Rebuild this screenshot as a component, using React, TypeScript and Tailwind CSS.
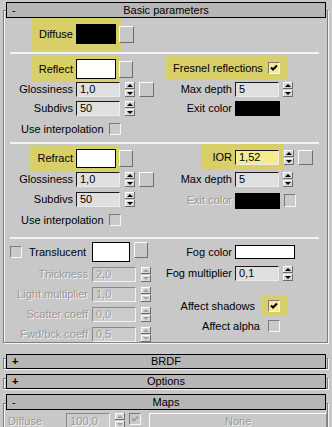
const DIS = "text-[#999999] [text-shadow:1px_1px_0_#f4f4f4]";
const HL = "bg-[#d8cf68]";

type Cn = { className?: string };

function Spinner({ className = "", off = false }: Cn & { off?: boolean }) {
  const a = off ? "#a2a2a2" : "#000000";
  return (
    <svg width="10" height="15" viewBox="0 0 10 15" className={`block shrink-0 ${className}`}>
      <rect x="0" y="0" width="10" height="7" fill="#d8d8d8" />
      <rect x="0" y="8" width="10" height="7" fill="#d8d8d8" />
      <rect x="0" y="0" width="10" height="1" fill="#ffffff" />
      <rect x="0" y="0" width="1" height="7" fill="#ffffff" />
      <rect x="0" y="6" width="10" height="1" fill="#6c6c6c" />
      <rect x="9" y="0" width="1" height="7" fill="#6c6c6c" />
      <rect x="0" y="8" width="10" height="1" fill="#ffffff" />
      <rect x="0" y="8" width="1" height="7" fill="#ffffff" />
      <rect x="0" y="14" width="10" height="1" fill="#6c6c6c" />
      <rect x="9" y="8" width="1" height="7" fill="#6c6c6c" />
      <polygon points="5,2 8,5 2,5" fill={a} />
      <polygon points="2,10 8,10 5,13" fill={a} />
    </svg>
  );
}

function MapBtn({ className = "" }: Cn) {
  return (
    <div
      className={`shrink-0 bg-[#c8c8c8] border border-t-white border-l-white border-b-[#6f6f6f] border-r-[#6f6f6f] ${className}`}
    />
  );
}

function Swatch({ className = "" }: Cn) {
  return <div className={`shrink-0 border border-black ${className}`} />;
}

function Field({
  value,
  className = "",
  tone = "normal",
}: Cn & { value: string; tone?: "normal" | "yellow" | "off" }) {
  const look =
    tone === "yellow"
      ? "bg-[#f3ed92] border-t-[#1a1a1a] border-l-[#1a1a1a] border-b-[#ececec] border-r-[#ececec]"
      : tone === "off"
      ? `bg-[#cbcbcb] border-t-[#8a8a8a] border-l-[#8a8a8a] border-b-[#f2f2f2] border-r-[#f2f2f2] ${DIS}`
      : "bg-[#dfdfdf] border-t-[#1a1a1a] border-l-[#1a1a1a] border-b-[#ececec] border-r-[#ececec]";
  return (
    <div className={`w-[44px] h-[15px] shrink-0 border pl-[3px] flex items-center ${look} ${className}`}>
      {value}
    </div>
  );
}

function Check({
  className = "",
  checked = false,
  tone = "normal",
}: Cn & { checked?: boolean; tone?: "normal" | "yellow" | "off" }) {
  const bg = tone === "yellow" ? "bg-[#f3ec97]" : "bg-[#cacaca]";
  const mark = tone === "off" ? "#a0a0a0" : "#000000";
  return (
    <div
      className={`w-[12px] h-[12px] shrink-0 border border-t-[#7a7a7a] border-l-[#7a7a7a] border-b-[#f6f6f6] border-r-[#f6f6f6] ${bg} ${className}`}
    >
      {checked && (
        <svg width="10" height="10" viewBox="0 0 10 10" className="block">
          <polyline points="2,4.5 4,6.5 8,2.5" fill="none" stroke={mark} strokeWidth="2" />
        </svg>
      )}
    </div>
  );
}

function Bar({ sign, title, className = "" }: Cn & { sign: string; title: string }) {
  return (
    <div
      className={`relative z-10 ml-[6px] w-[320px] grid grid-cols-[16px_1fr_16px] items-center bg-[#b6b6b6] border border-black ${className}`}
    >
      <span className={`pl-[5px] ${sign === "+" ? "font-bold" : ""}`}>{sign}</span>
      <span className="text-center">{title}</span>
      <span />
    </div>
  );
}

const frame =
  "ml-[3px] mr-[4px] border border-[#7d7d7d] shadow-[inset_1px_1px_0_#f4f4f4,1px_1px_0_#f4f4f4]";

function Sep({ className = "" }: Cn) {
  return <div className={`ml-[6px] w-[309px] h-[2px] bg-[#f2f2f2] ${className}`} />;
}

function Collapsed({ title, className = "" }: Cn & { title: string }) {
  return (
    <div className={className}>
      <Bar sign="+" title={title} className="h-[15px]" />
      <div className={`-mt-[11px] h-[11px] ${frame}`} />
    </div>
  );
}

function NumLeft({ label, value, lw, map = false, off = false }: { label: string; value: string; lw: string; map?: boolean; off?: boolean }) {
  return (
    <div className="flex h-[15px] items-center">
      <span className={`${lw} shrink-0 text-right ${off ? DIS : ""}`}>{label}</span>
      <Field value={value} tone={off ? "off" : "normal"} className={off ? "ml-[4px]" : "ml-[3px]"} />
      <Spinner className="ml-[5px]" off={off} />
      {map && <MapBtn className="ml-[4px] w-[15px] h-[15px]" />}
    </div>
  );
}

export default function App() {
  return (
    <div className="w-[332px] h-[427px] overflow-hidden bg-[#c8c8c8] text-[11px] leading-none text-black font-['Liberation_Sans',Arial,sans-serif] select-none">
      <div className="pt-[2px]">
        <Bar sign="-" title="Basic parameters" className="h-[16px]" />
        <div className={`-mt-[8px] pt-[6px] ${frame}`}>
          {/* diffuse */}
          <div className="flex h-[34px] items-center">
            <div className={`ml-[28px] w-[89px] h-full flex items-center ${HL}`}>
              <span className="w-[41px] text-right">Diffuse</span>
              <div className="ml-[3px] w-[40px] h-[20px] bg-black" />
            </div>
            <MapBtn className="relative -ml-[2px] w-[15px] h-[17px]" />
          </div>
          <Sep className="mt-[1px]" />

          {/* reflection */}
          <div className="mt-[2px] flex h-[26px]">
            <div className="w-[156px] shrink-0 flex items-center">
              <div className={`ml-[28px] w-[87px] h-full flex items-center ${HL}`}>
                <span className="w-[41px] text-right">Reflect</span>
                <Swatch className="ml-[3px] w-[40px] h-[20px] bg-white" />
              </div>
              <MapBtn className="w-[14px] h-[17px]" />
            </div>
            <div className={`ml-[6px] w-[121px] h-[24px] flex items-center pl-[7px] pr-[7px] ${HL}`}>
              <span className="flex-1">Fresnel reflections</span>
              <Check checked tone="yellow" />
            </div>
          </div>
          <div className="flex">
            <div className="w-[156px] shrink-0">
              <NumLeft label="Glossiness" value="1,0" lw="w-[69px]" map />
              <div className="mt-[4px]">
                <NumLeft label="Subdivs" value="50" lw="w-[69px]" />
              </div>
            </div>
            <div>
              <div className="flex h-[15px] items-center">
                <span className="w-[72px] text-right">Max depth</span>
                <Field value="5" className="ml-[3px]" />
                <Spinner className="ml-[4px]" />
              </div>
              <div className="mt-[4px] flex h-[15px] items-center">
                <span className="w-[72px] text-right">Exit color</span>
                <Swatch className="ml-[3px] w-[45px] h-[15px] bg-black" />
              </div>
            </div>
          </div>
          <div className="mt-[6px] flex h-[14px] items-center">
            <span className="ml-[17px] w-[88px]">Use interpolation</span>
            <Check />
          </div>
          <Sep className="mt-[6px]" />

          {/* refraction */}
          <div className="flex h-[27px]">
            <div className="w-[156px] shrink-0 flex items-end">
              <div className="flex items-center">
                <div className={`ml-[26px] w-[89px] h-[25px] flex items-center ${HL}`}>
                  <span className="w-[43px] text-right">Refract</span>
                  <Swatch className="ml-[3px] w-[40px] h-[19px] bg-white" />
                </div>
                <MapBtn className="w-[14px] h-[17px]" />
              </div>
            </div>
            <div className="flex h-[26px] items-center">
              <div className={`ml-[41px] w-[82px] h-full flex items-center ${HL}`}>
                <span className="w-[31px] text-right">IOR</span>
                <Field value="1,52" tone="yellow" className="ml-[3px]" />
              </div>
              <Spinner className="ml-[1px]" />
              <MapBtn className="ml-[4px] w-[15px] h-[15px]" />
            </div>
          </div>
          <div className="mt-[1px] flex">
            <div className="w-[156px] shrink-0">
              <NumLeft label="Glossiness" value="1,0" lw="w-[69px]" map />
              <div className="mt-[5px]">
                <NumLeft label="Subdivs" value="50" lw="w-[69px]" />
              </div>
            </div>
            <div>
              <div className="flex h-[15px] items-center">
                <span className="w-[72px] text-right">Max depth</span>
                <Field value="5" className="ml-[3px]" />
                <Spinner className="ml-[4px]" />
              </div>
              <div className="mt-[5px] flex h-[17px] items-center">
                <span className={`w-[72px] text-right ${DIS}`}>Exit color</span>
                <Swatch className="ml-[3px] w-[45px] h-[16px] bg-black" />
                <Check tone="off" className="ml-[4px] h-[13px]" />
              </div>
            </div>
          </div>
          <div className="mt-[4px] flex h-[14px] items-center">
            <span className="ml-[17px] w-[88px]">Use interpolation</span>
            <Check />
          </div>
          <Sep className="mt-[10px]" />

          {/* translucency */}
          <div className="flex">
            <div className="w-[156px] shrink-0">
              <div className="mt-[3px] flex h-[20px] items-center">
                <Check className="ml-[6px]" />
                <span className="ml-[7px] w-[63px]">Translucent</span>
                <Swatch className="w-[38px] h-[20px] bg-white" />
                <MapBtn className="ml-[4px] self-start w-[14px] h-[16px]" />
              </div>
              <div className="mt-[5px]">
                <NumLeft label="Thickness" value="2,0" lw="w-[84px]" off />
              </div>
              <div className="mt-[5px]">
                <NumLeft label="Light multiplier" value="1,0" lw="w-[84px]" off />
              </div>
              <div className="mt-[5px]">
                <NumLeft label="Scatter coeff" value="0,0" lw="w-[84px]" off />
              </div>
              <div className="mt-[5px]">
                <NumLeft label="Fwd/bck coeff" value="0,5" lw="w-[84px]" off />
              </div>
            </div>
            <div>
              <div className="mt-[3px] flex h-[20px] items-center">
                <span className="w-[72px] text-right">Fog color</span>
                <Swatch className="ml-[3px] w-[60px] h-[14px] bg-white" />
              </div>
              <div className="mt-[4px] flex h-[15px] items-center">
                <span className="w-[72px] text-right">Fog multiplier</span>
                <Field value="0,1" className="ml-[3px]" />
                <Spinner className="ml-[4px]" />
              </div>
              <div className="mt-[15px] flex h-[20px] items-center">
                <span className="w-[95px] text-right">Affect shadows</span>
                <div className={`ml-[7px] w-[25px] h-full flex items-center pl-[6px] ${HL}`}>
                  <Check checked tone="yellow" />
                </div>
              </div>
              <div className="mt-[3px] flex h-[14px] items-center">
                <span className="w-[100px] text-right">Affect alpha</span>
                <Check className="ml-[8px]" />
              </div>
            </div>
          </div>
        </div>
      </div>

      <Collapsed title="BRDF" className="mt-[11px]" />
      <Collapsed title="Options" className="mt-[5px]" />

      <div className="mt-[5px]">
        <Bar sign="-" title="Maps" className="h-[16px]" />
        <div className={`-mt-[7px] pt-[9px] h-[40px] ${frame}`}>
          <div className="flex h-[16px] items-center">
            <span className={`ml-[4px] w-[59px] ${DIS}`}>Diffuse</span>
            <Field value="100,0" tone="off" className="w-[38px] h-[16px]" />
            <Spinner className="ml-[5px] self-start" off />
            <Check checked tone="off" className="ml-[4px] self-start" />
            <div
              className={`ml-[8px] w-[180px] h-[16px] border border-t-white border-l-white border-b-[#8a8a8a] border-r-[#8a8a8a] flex items-center justify-center ${DIS}`}
            >
              None
            </div>
          </div>
        </div>
      </div>
    </div>
  );
}
